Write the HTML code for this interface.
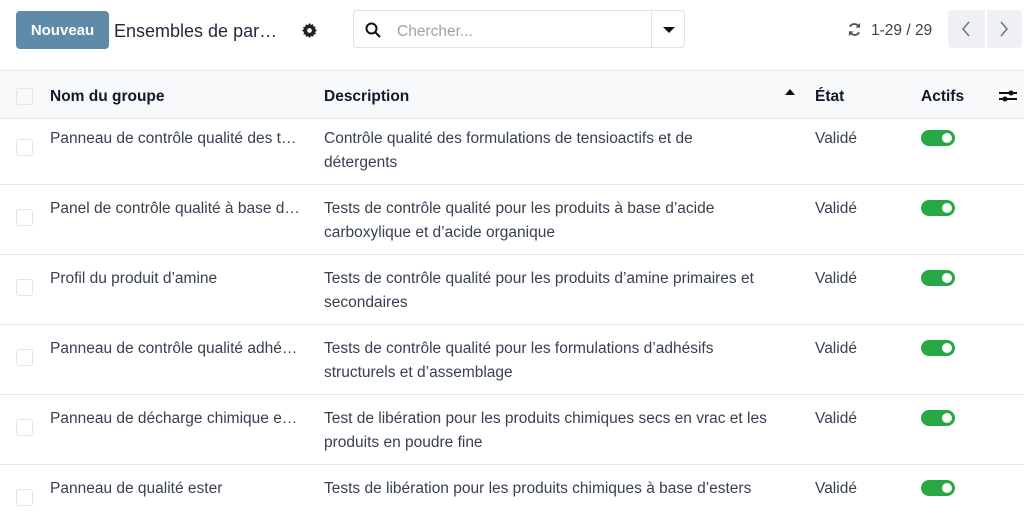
<!DOCTYPE html><html><head><meta charset="utf-8"><style>
body{margin:0;width:1024px;height:503px;overflow:hidden;background:#fff;font-family:"Liberation Sans",sans-serif;color:#374151;font-size:15.5px}
.top{position:absolute;left:0;top:0;width:1024px;height:70px}
.btn{position:absolute;left:16px;top:11px;width:93px;height:38px;background:#5f8ba8;border-radius:4px;color:#fff;font-weight:bold;font-size:15px;line-height:40px;text-align:center}
.title{position:absolute;left:114px;top:21px;font-size:18px;color:#1f2937}
.search{position:absolute;left:353px;top:10px;width:332px;height:38px;border:1px solid #dee2e6;border-radius:4px;box-sizing:border-box}
.pager{position:absolute;left:948px;top:10px;width:74px;height:38px;background:#eef0f3;border-radius:4px}
table{position:absolute;top:70px;left:0;width:1024px;border-collapse:collapse}
th{height:43px;padding:4px 0 0;background:#f8f9fa;text-align:left;font-weight:bold;color:#111827;font-size:15.5px;border-top:1px solid #e5e7eb}
td{vertical-align:top;padding:12px 0 9px;line-height:24px;border-top:1px solid #e5e7eb}
tr.r1 td{padding-top:8px}
.cb{display:inline-block;width:15px;height:15px;border:1px solid #e3e5e8;border-radius:3px;margin-left:16px;margin-top:12px}
.tg{display:inline-block;width:34px;height:16px;background:#28a745;border-radius:8px;position:relative;margin-top:3px}
.tg:after{content:"";position:absolute;right:3px;top:3px;width:10px;height:10px;border-radius:50%;background:#fff}
</style></head><body>
<div class="top">
<div class="btn">Nouveau</div>
<div class="title">Ensembles de par…</div>
<svg style="position:absolute;left:302px;top:23px" width="15" height="15" viewBox="0 0 16 16"><path fill="#222" d="M8 0l1.5 2 2.3-.8.4 2.4 2.4.4-.8 2.3L16 8l-2 1.5.8 2.3-2.4.4-.4 2.4-2.3-.8L8 16l-1.5-2-2.3.8-.4-2.4-2.4-.4.8-2.3L0 8l2-1.5-.8-2.3 2.4-.4.4-2.4 2.3.8z"/><circle cx="8" cy="8" r="2.5" fill="#fff"/></svg>
<div class="search">
<svg style="position:absolute;left:11px;top:11px" width="16" height="16" viewBox="0 0 16 16"><circle cx="6.5" cy="6.5" r="5" fill="none" stroke="#111" stroke-width="2"/><path d="M10 10l5 5" stroke="#111" stroke-width="2"/></svg>
<span style="position:absolute;left:43px;top:12px;color:#9ca3af">Chercher...</span>
<div style="position:absolute;left:297px;top:0;width:1px;height:36px;background:#dee2e6"></div>
<div style="position:absolute;left:309px;top:16px;border-left:6px solid transparent;border-right:6px solid transparent;border-top:6px solid #111"></div>
</div>
<svg style="position:absolute;left:847px;top:22px" width="15" height="15" viewBox="0 0 16 16"><path d="M13 6A5.5 5.5 0 0 0 3 5M3 10a5.5 5.5 0 0 0 10 1" fill="none" stroke="#555" stroke-width="2"/><path d="M14 1v5h-5zM2 15v-5h5z" fill="#555"/></svg>
<span style="position:absolute;left:871px;top:22px;color:#374151">1-29 / 29</span>
<div class="pager"><div style="position:absolute;left:37px;top:0;width:2px;height:38px;background:#fff"></div>
<svg style="position:absolute;left:12px;top:11px" width="12" height="16"><path d="M9 1L3 8l6 7" fill="none" stroke="#6b7280" stroke-width="1.5"/></svg>
<svg style="position:absolute;left:50px;top:11px" width="12" height="16"><path d="M3 1l6 7-6 7" fill="none" stroke="#6b7280" stroke-width="1.5"/></svg></div>
</div>
<table>
<tr><th style="width:50px"><span class="cb" style="margin-top:0;vertical-align:middle"></span></th><th style="width:274px">Nom du groupe</th><th style="width:491px;position:relative">Description<span style="position:absolute;right:20px;top:18px;border-left:5px solid transparent;border-right:5px solid transparent;border-bottom:6px solid #111"></span></th><th style="width:106px">État</th><th style="width:70px">Actifs</th><th><svg width="20" height="16" viewBox="0 0 20 16" style="margin-left:7px;margin-top:4px"><path d="M1 5h18M1 11h18" stroke="#111" stroke-width="2"/><circle cx="13" cy="5" r="2.5" fill="#111"/><circle cx="7" cy="11" r="2.5" fill="#111"/></svg></th></tr>
<tr class="r1"><td><span class="cb"></span></td><td>Panneau de contrôle qualité des t…</td><td>Contrôle qualité des formulations de tensioactifs et de<br>détergents</td><td>Validé</td><td><span class="tg"></span></td><td></td></tr>
<tr><td><span class="cb"></span></td><td>Panel de contrôle qualité à base d…</td><td>Tests de contrôle qualité pour les produits à base d’acide<br>carboxylique et d’acide organique</td><td>Validé</td><td><span class="tg"></span></td><td></td></tr>
<tr><td><span class="cb"></span></td><td>Profil du produit d’amine</td><td>Tests de contrôle qualité pour les produits d’amine primaires et<br>secondaires</td><td>Validé</td><td><span class="tg"></span></td><td></td></tr>
<tr><td><span class="cb"></span></td><td>Panneau de contrôle qualité adhé…</td><td>Tests de contrôle qualité pour les formulations d’adhésifs<br>structurels et d’assemblage</td><td>Validé</td><td><span class="tg"></span></td><td></td></tr>
<tr><td><span class="cb"></span></td><td>Panneau de décharge chimique e…</td><td>Test de libération pour les produits chimiques secs en vrac et les<br>produits en poudre fine</td><td>Validé</td><td><span class="tg"></span></td><td></td></tr>
<tr><td><span class="cb"></span></td><td>Panneau de qualité ester</td><td>Tests de libération pour les produits chimiques à base d’esters</td><td>Validé</td><td><span class="tg"></span></td><td></td></tr>
</table>
</body></html>
